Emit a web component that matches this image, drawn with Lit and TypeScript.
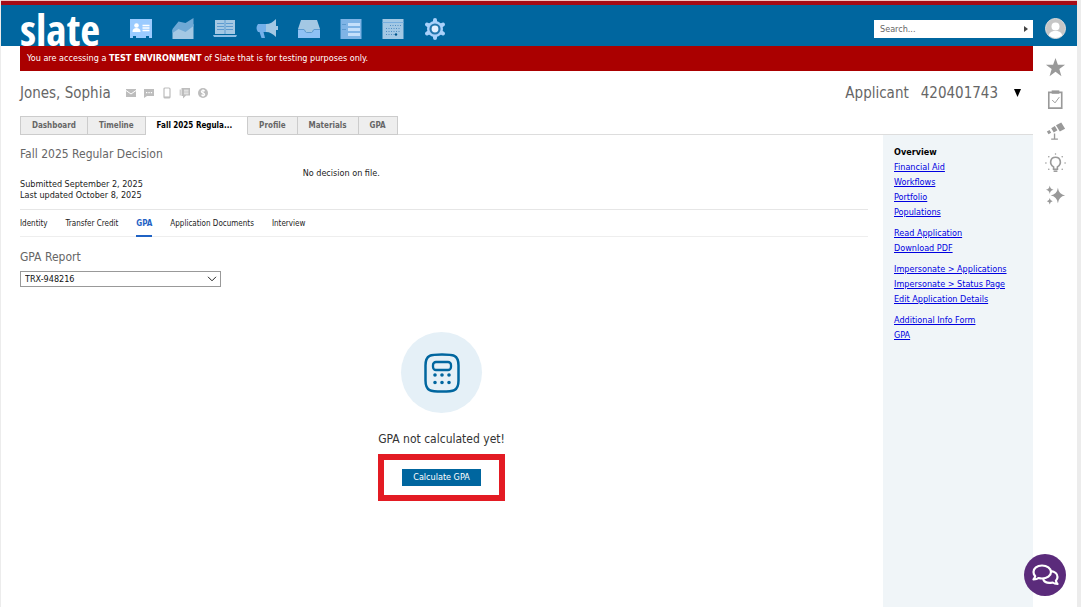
import { LitElement, html, css, svg } from "lit";
import { customElement } from "lit/decorators.js";
import { classMap } from "lit/directives/class-map.js";

const L = "#a9d1fb";
const P = "#a3c8e4";
const D = "#5d9bd0";

const NAV = [
  { label: "Records", art: svg`<path fill="#9bcbff" d="M1 2h22v19h-3v-2h-3v2H7v-2H4v2H1z"/><circle cx="7.500" cy="8.500" r="2.300" fill="#fff"/><path fill="#fff" d="M3.500 15c0-3 1.500-4 4-4s4 1 4 4z"/><path stroke="#fff" stroke-width="1.300" d="M13.500 8.500h7M13.500 11h7M13.500 13.500h7"/>` },
  { label: "Reports", art: svg`<path fill=${P} d="M1.500 22v-9l6-5 7 3 8-4v15z"/><path fill="#6fa9d6" d="M1.500 12l6-7.500 7 1.500 8-5v8l-8 6-7-3-6 4z"/>` },
  { label: "Courses", art: svg`<path fill=${P} d="M2 3h20v14H2z"/><path fill="#8fbfe6" d="M0 18h24l-1 2H1z"/><path stroke=${D} d="M4 6.500h7M4 9.500h7M4 12.500h7M13 6.500h7M13 9.500h7M13 12.500h7M12 3v14"/>` },
  { label: "Campaigns", art: svg`<path fill="#74b0ea" d="M3 7h8v8H8.500l1.500 6H6.500L4.500 15H3q-3-4 0-8z"/><path fill=${P} d="M11 7c4 0 7-2 10-5v18c-3-3-6-5-10-5z"/><path stroke=${P} stroke-width="2" d="M22 9v4"/>` },
  { label: "Inbox", art: svg`<path fill=${P} d="M4 3h16l3 9v9H1v-9z"/><path fill="#8fc1f5" d="M1 13h6l2 3h6l2-3h6v8H1z"/><path fill="none" stroke=${D} d="M1 12.500h6c1 0 1 3 2.500 3h5c1.500 0 1.500-3 2.500-3h6"/>` },
  { label: "Forms", art: svg`<path fill="#7fb4e6" d="M1.500 2h21v20h-21z"/><path stroke="#c5e0fb" stroke-width="3" d="M9 7.500h12M9 12.500h12M9 17.500h12"/><path stroke=${D} d="M3 7.500h4M3 12.500h4"/>` },
  { label: "Calendar", art: svg`<path fill=${P} d="M1.500 2h21v20h-21z"/><path fill="#77aede" d="M1.500 5h21v1h-21z"/><path stroke="#4f8dc2" stroke-dasharray="1 1.500" d="M9 8.500h11M5 11.500h15M5 14.500h15M5 17.500h10"/><circle cx="15" cy="17.500" r="1.200" fill="#00568c"/>` },
  { label: "Settings", art: svg`<path stroke=${L} stroke-width="4" stroke-linecap="round" d="M12 3v18M4 7.500l16 9M4 16.500l16-9"/><circle cx="12" cy="12" r="8" fill=${L}/><circle cx="12" cy="12" r="4.500" fill="#e3f0ff" stroke="#2376ad" stroke-width="2.200"/>` },
];

const RAIL = [
  { label: "Favorites", art: svg`<path fill="#999" d="M12 2l2.500 7.100h7.500l-6 4.500 2.200 7.400-6.200-4.500L5.800 21 8 13.600 2 9.100h7.500z"/>` },
  { label: "Tasks", art: svg`<path fill="none" stroke="#999" stroke-width="1.700" d="M5 4.500h13.500v16.500H5z"/><path fill="#999" d="M8 2.500h8V6H8z"/><path fill="none" stroke="#999" d="M8.500 12.500l3 3 4.500-6"/>` },
  { label: "Explore", art: svg`<path fill="#999" d="M12.500 5.500L18 2.500l4 6.500-5.500 3zM7.500 8.500l3.800-2.200 2.700 4.500-3.800 2.200zM3 12l2.800-1.500 1.700 2.900-2.800 1.500z"/><path fill="none" stroke="#999" stroke-width="1.400" d="M11 14v6M7.500 20h7"/>` },
  { label: "Ideas", art: svg`<path fill="none" stroke="#999" stroke-width="1.700" d="M10 18v-2.500c-5-3-3.500-10 2-10s7 7 2 10V18z"/><path stroke="#999" stroke-width="1.600" d="M10 20h4"/><g fill="#999"><circle cx="12" cy="2" r=".8"/><circle cx="5" cy="5" r=".8"/><circle cx="19" cy="5" r=".8"/><circle cx="2" cy="11.500" r=".8"/><circle cx="22" cy="11.500" r=".8"/><circle cx="5" cy="18" r=".8"/><circle cx="19" cy="18" r=".8"/></g>` },
  { label: "Assistant", art: svg`<path fill="#999" d="M14.500 4q1 7 7.500 8-6.500 1-7.500 8-1-7-7.500-8 6.500-1 7.500-8zM6 1.500q.6 4 4 4.500-3.400.5-4 4.500-.6-4-4-4.500 3.400-.5 4-4.500zM6 14.500q.4 3 3 3.500-2.600.5-3 3.500-.4-3-3-3.500 2.600-.5 3-3.500z"/>` },
];

const CONTACT = [
  { label: "Email", art: svg`<path fill="#bdbdbd" d="M1 2h10v8H1z"/><path fill="none" stroke="#fff" d="M1 3.500l5 3.500 5-3.500"/>` },
  { label: "Chat", art: svg`<path fill="#bdbdbd" d="M1 2h10v7H4l-3 2z"/><path fill="#fff" d="M3 5h1.300v1.300H3zM5.400 5h1.300v1.300H5.400zM7.800 5h1.300v1.300H7.800z"/>` },
  { label: "Phone", art: svg`<rect x="3" y="1" width="6" height="10" rx="1" fill="#fff" stroke="#bdbdbd" stroke-width="1.200"/><path stroke="#bdbdbd" stroke-width="1.500" d="M3 10.200h6"/>` },
  { label: "Notes", art: svg`<path fill="#bdbdbd" d="M2.500 1H11v7.500H7L4 11.500V9H2.500z"/><path stroke="#fff" stroke-width=".8" d="M5 3.200h4.500M5 5h4.500M5 6.800h4.500"/><path stroke="#bdbdbd" d="M1.200 2.500v6"/>` },
  { label: "Payments", art: svg`<circle cx="6" cy="6" r="5" fill="#bdbdbd"/><path fill="none" stroke="#fff" stroke-width="1.100" d="M7.700 4.200C7 3 4.300 3.200 4.300 4.700S7.700 6 7.700 7.400 5 9 4.300 7.800M6 2.300v7.400"/>` },
];

const TABS = ["Dashboard", "Timeline", "Fall 2025 Regula...", "Profile", "Materials", "GPA"];
const SUBTABS = ["Identity", "Transfer Credit", "GPA", "Application Documents", "Interview"];
const LINKS = [
  ["Overview", "Financial Aid", "Workflows", "Portfolio", "Populations"],
  ["Read Application", "Download PDF"],
  ["Impersonate > Applications", "Impersonate > Status Page", "Edit Application Details"],
  ["Additional Info Form", "GPA"],
];

@customElement("app-root")
export class AppRoot extends LitElement {
  static styles = css`
    :host { display: block; min-height: 100vh; box-sizing: border-box; font: 9px/11px "DejaVu Sans Condensed", "Noto Sans", sans-serif; color: #222; background: #fff; border-left: 1px solid #ececec; border-right: 4px solid #ececec; }
    * { box-sizing: border-box; }
    button { font: inherit; color: inherit; border: 0; padding: 0; background: none; cursor: pointer; }
    svg { display: block; }
    h1, h2, h3, p { margin: 0; font-weight: 400; }
    .page { display: flex; flex-direction: column; min-height: 100vh; }
    .top { display: flex; height: 46px; flex: none; background: #00669f; border-top: 1px solid #f3c4c0; padding-left: 19px; box-shadow: inset 0 4px #a50b16; }
    .logo { width: 80px; color: #fff; font: bold 43px/57px "Open Sans Condensed", "Liberation Sans Narrow", "Noto Sans", sans-serif; text-decoration: none; }
    .nav { display: flex; flex: 1; gap: 18px; padding: 16px 0 0 29px; }
    .nav button { align-self: flex-start; }
    .nav svg { width: 24px; height: 24px; }
    .search { width: 159px; height: 18px; margin-top: 19px; background: #fff; display: flex; align-items: center; padding: 0 5px 0 6px; }
    .search input { flex: 1; min-width: 0; border: 0; padding: 0; outline: 0; font: inherit; background: none; }
    .search input::placeholder { color: #666; opacity: 1; }
    .avatar { width: 44px; padding: 17px 0 0 12px; align-self: flex-start; }
    .avatar svg { width: 21px; height: 21px; }
    .body { display: flex; flex: 1; }
    .main { flex: 1; min-width: 0; display: flex; flex-direction: column; padding-left: 19px; }
    .banner { background: #a00; color: #fff; padding: 7px; }
    .person { display: flex; align-items: center; height: 45px; padding-bottom: 1px; color: #666; }
    .person h1, .person h2 { font-size: 15px; line-height: 20px; }
    .contact { display: flex; gap: 6px; margin-left: 14px; flex: 1; }
    .contact svg { width: 12px; height: 12px; }
    .ident { display: flex; gap: 12px; }
    .drop { width: 9px; margin: 0 10px 0 16px; }
    .tabs { display: flex; height: 19px; border-bottom: 1px solid #ddd; }
    .tab { height: 19px; padding: 0 11px; font-size: 8px; font-weight: bold; color: #666; background: #eee; border: 1px solid #ccc; border-left-width: 0; }
    .tab:first-child { border-left-width: 1px; }
    .tab.on { background: #fff; color: #000; border-top-color: #ddd; border-bottom-color: #fff; padding: 0 15px 0 11px; }
    .split { display: flex; flex: 1; }
    .content { flex: 1; min-width: 0; padding-right: 15px; }
    .summary { display: grid; grid-template-columns: 1fr 2fr; height: 75px; border-bottom: 1px solid #e6e6e6; }
    .title { font-size: 12px; line-height: 16px; color: #666; }
    .summary .title { padding-top: 11px; }
    .dates { margin-top: 17px; }
    .decision { padding-top: 33px; }
    .subs { display: flex; gap: 18px; height: 27px; border-bottom: 1px solid #eee; font-size: 8px; }
    .sub { height: 27px; text-decoration: none; color: #222; padding-top: 8px; }
    .sub.on { color: #1f62c4; font-weight: bold; border-bottom: 2px solid #1f62c4; }
    .report { padding-top: 12px; display: flex; flex-direction: column; align-items: flex-start; gap: 6px; }
    .pick { display: grid; width: 201px; }
    .pick select, .pick svg { grid-area: 1 / 1; }
    .pick select { appearance: none; width: 100%; height: 16px; border: 1px solid #999; border-radius: 0; background: #fff; padding: 0 4px; font: inherit; color: #111; }
    .pick svg { width: 10px; height: 6px; align-self: center; justify-self: end; margin-right: 4px; pointer-events: none; }
    .empty { display: flex; flex-direction: column; align-items: center; padding-top: 45px; margin-right: 5px; }
    .disc { width: 81px; height: 81px; border-radius: 50%; background: #e5f0f7; display: grid; place-items: center; }
    .disc svg { width: 36px; height: 40px; }
    .msg { font-size: 12px; line-height: 16px; padding: 18px 0 7px; color: #333; }
    .mark { border: 6px solid #e31b23; width: 127px; height: 47px; display: grid; place-items: center; }
    .calc { background: #00669f; color: #fff; width: 79px; height: 17px; }
    .side { width: 150px; background: #f0f5f8; padding: 10px 11px; display: flex; flex-direction: column; gap: 6px; line-height: 15px; }
    .group { display: flex; flex-direction: column; align-items: flex-start; }
    .group a { color: #0000e0; }
    .group a.cur { color: #000; font-weight: bold; text-decoration: none; }
    .rail { width: 44px; display: flex; flex-direction: column; align-items: center; gap: 9px; padding-top: 10px; }
    .rail svg { width: 23px; height: 23px; }
    .chat { position: fixed; right: 15px; bottom: 11px; width: 42px; height: 42px; border-radius: 50%; background: #5b2b7b; display: grid; place-items: center; }
    .chat svg { width: 27px; height: 22px; }
  `;

  render() {
    return html`<div class="page">
      <header class="top">
        <a class="logo" href="#">slate</a>
        <nav class="nav" aria-label="Main">
          ${NAV.map((n) => html`<button aria-label=${n.label}><svg viewBox="0 0 24 24">${n.art}</svg></button>`)}
        </nav>
        <label class="search"><input type="text" placeholder="Search..." aria-label="Search" />
          <svg width="4" height="6" viewBox="0 0 4 6"><path fill="#444" d="M0 0l4 3-4 3z"/></svg></label>
        <button class="avatar" aria-label="Account"><svg viewBox="0 0 21 21"><circle cx="10.500" cy="10.500" r="10" fill="#c6c6c6" stroke="#ddd"/><circle cx="10.500" cy="8.500" r="4" fill="#fff"/><path fill="#fff" d="M4 17.500c0-3 3-4 4.500-4.500h4c1.500.5 4.500 1.500 4.500 4.500q-6.500 5-13 0z"/></svg></button>
      </header>
      <div class="body">
        <div class="main">
          <div class="banner">You are accessing a <b>TEST ENVIRONMENT</b> of Slate that is for testing purposes only.</div>
          <div class="person">
            <h1>Jones, Sophia</h1>
            <div class="contact">${CONTACT.map((c) => html`<button aria-label=${c.label}><svg viewBox="0 0 12 12">${c.art}</svg></button>`)}</div>
            <h2 class="ident"><span>Applicant</span><span>420401743</span></h2>
            <button class="drop" aria-label="More"><svg width="7" height="8" viewBox="0 0 7 8"><path d="M0 0h7L3.500 8z"/></svg></button>
          </div>
          <div class="tabs">${TABS.map((t, i) => html`<button class=${classMap({ tab: true, on: i === 2 })}>${t}</button>`)}</div>
          <div class="split">
            <main class="content">
              <section class="summary">
                <div><h2 class="title">Fall 2025 Regular Decision</h2>
                  <p class="dates">Submitted September 2, 2025<br />Last updated October 8, 2025</p></div>
                <p class="decision">No decision on file.</p>
              </section>
              <nav class="subs" aria-label="Application">${SUBTABS.map((t, i) => html`<a href="#" class=${classMap({ sub: true, on: i === 2 })}>${t}</a>`)}</nav>
              <section class="report">
                <label class="title" for="report">GPA Report</label>
                <div class="pick"><select id="report"><option>TRX-948216</option></select>
                  <svg viewBox="0 0 10 6"><path fill="none" stroke="#222" d="M1 .8l4 4 4-4"/></svg></div>
              </section>
              <section class="empty">
                <div class="disc"><svg viewBox="0 0 36 40" fill="none" stroke="#00669f"><path stroke-width="2.500" d="M18 1.500c11 0 16.500 0 16.500 11v15c0 11-5.500 11-16.500 11s-16.500 0-16.500-11v-15c0-11 5.500-11 16.500-11z"/><rect x="9" y="9" width="18" height="8" rx="3" stroke-width="2.300"/><path stroke-width="3.600" stroke-linecap="round" d="M11 22h.01M18 22h.01M25 22h.01M11 29.500h.01M18 29.500h.01M25 29.500h.01"/></svg></div>
                <p class="msg">GPA not calculated yet!</p>
                <div class="mark"><button class="calc">Calculate GPA</button></div>
              </section>
            </main>
            <aside class="side">${LINKS.map((g, gi) => html`<div class="group">${g.map((t, i) => html`<a href="#" class=${classMap({ cur: gi + i === 0 })}>${t}</a>`)}</div>`)}</aside>
          </div>
        </div>
        <nav class="rail" aria-label="Tools">${RAIL.map((r) => html`<button aria-label=${r.label}><svg viewBox="0 0 24 24">${r.art}</svg></button>`)}</nav>
      </div>
      <button class="chat" aria-label="Open chat"><svg viewBox="0 0 27 22" fill="none" stroke="#fff" stroke-width="2.200" stroke-linejoin="round"><path d="M10 1.500c5 0 9 2.700 9 6.500s-4 6.500-9 6.500c-1.500 0-2.500-.2-3.500-.5-1 1-3 1.500-5 1.500 1-1.200 1.500-2.200 1.700-3.500C2 11 1.500 9.500 1.500 8c0-3.800 3.500-6.500 8.500-6.500z"/><path d="M19 7.200c3.800.3 6.500 2.700 6.500 5.800 0 1.500-.6 2.700-1.600 3.700.2 1.300.7 2.300 1.600 3.300-2 0-3.700-.6-4.800-1.500-4 1-8 .2-9.700-3.500"/></svg></button>
    </div>`;
  }
}
